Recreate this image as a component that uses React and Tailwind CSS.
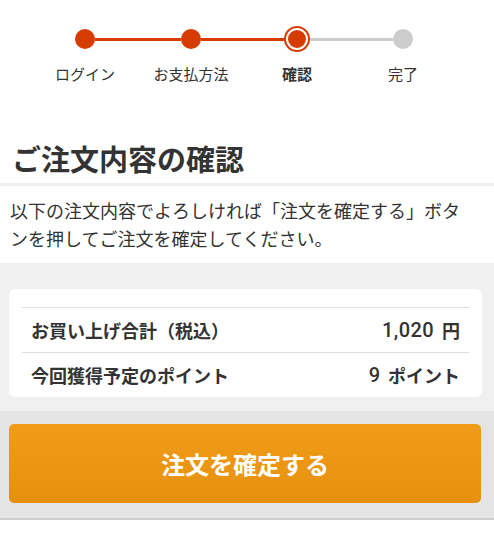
import React from "react";

function Step({ label, state, left, right }) {
  const lineCls = (c) =>
    c === "red" ? "bg-[#d63b00]" : c === "gray" ? "bg-[#cccccc]" : "bg-transparent";
  return (
    <div className="w-[106px] flex flex-col items-center">
      <div className="w-full h-[26px] flex items-center">
        <div className={`flex-1 h-[3px] ${lineCls(left)}`} />
        {state === "active" ? (
          <div className="w-[26px] h-[26px] rounded-full border-2 border-[#d63b00] bg-white flex items-center justify-center">
            <div className="w-[18px] h-[18px] rounded-full bg-[#d63b00]" />
          </div>
        ) : (
          <div
            className={`w-[20px] h-[20px] rounded-full ${
              state === "done" ? "bg-[#d63b00]" : "bg-[#cccccc]"
            }`}
          />
        )}
        <div className={`flex-1 h-[3px] ${lineCls(right)}`} />
      </div>
      <div
        className={`mt-[11px] h-[22px] leading-[22px] text-[15px] text-[#333] ${
          state === "active" ? "font-bold" : ""
        }`}
      >
        {label}
      </div>
    </div>
  );
}

export default function App() {
  return (
    <div className="w-[494px] min-h-[542px] bg-white font-['Noto_Sans_CJK_JP','Noto_Sans',sans-serif] text-[#333]">
      {/* stepper */}
      <div className="pt-[26px] pl-[32px] flex">
        <Step label="ログイン" state="done" left="none" right="red" />
        <Step label="お支払方法" state="done" left="red" right="red" />
        <Step label="確認" state="active" left="red" right="gray" />
        <Step label="完了" state="todo" left="gray" right="none" />
      </div>

      {/* title */}
      <div className="mt-[53px] pb-[5px] pl-[12px]">
        <h1 className="text-[29px] leading-[40px] font-bold text-[#333]">ご注文内容の確認</h1>
      </div>
      <div className="h-[3px] bg-[#f0f0f0]" />

      {/* description */}
      <div className="pt-[10px] pb-[11px] pl-[10px]">
        <p className="text-[18px] leading-[28px] text-[#333]">
          以下の注文内容でよろしければ「注文を確定する」ボタ
          <br />
          ンを押してご注文を確定してください。
        </p>
      </div>

      {/* summary */}
      <div className="bg-[#f0f0f0] pt-[26px] pb-[14px] pl-[9px] pr-[12px]">
        <div className="bg-white rounded-[6px] px-[13px] pt-[18px]">
          <div className="h-[45px] border-t border-[#dddddd] px-[9px] flex items-center justify-between text-[18px] font-bold text-[#333]">
            <span>お買い上げ合計（税込）</span>
            <span className="flex items-center">
              <span className="font-['Roboto',sans-serif] font-medium text-[20px] tracking-[0.02em]">1,020</span>
              <span className="ml-[8px]">円</span>
            </span>
          </div>
          <div className="h-[45px] border-t border-[#dddddd] px-[9px] flex items-center justify-between text-[18px] font-bold text-[#333]">
            <span>今回獲得予定のポイント</span>
            <span className="flex items-center">
              <span className="font-['Roboto',sans-serif] font-medium text-[20px]">9</span>
              <span className="ml-[8px]">ポイント</span>
            </span>
          </div>
        </div>
      </div>

      {/* action */}
      <div className="bg-[#e4e4e4] pt-[13px] pb-[15px] pl-[9px] pr-[13px] border-b-[2px] border-[#cfcfcf]">
        <button className="w-full h-[79px] rounded-[5px] bg-linear-to-b from-[#f19c18] to-[#e5910f] text-white text-[24px] font-bold flex items-center justify-center">
          注文を確定する
        </button>
      </div>
    </div>
  );
}
